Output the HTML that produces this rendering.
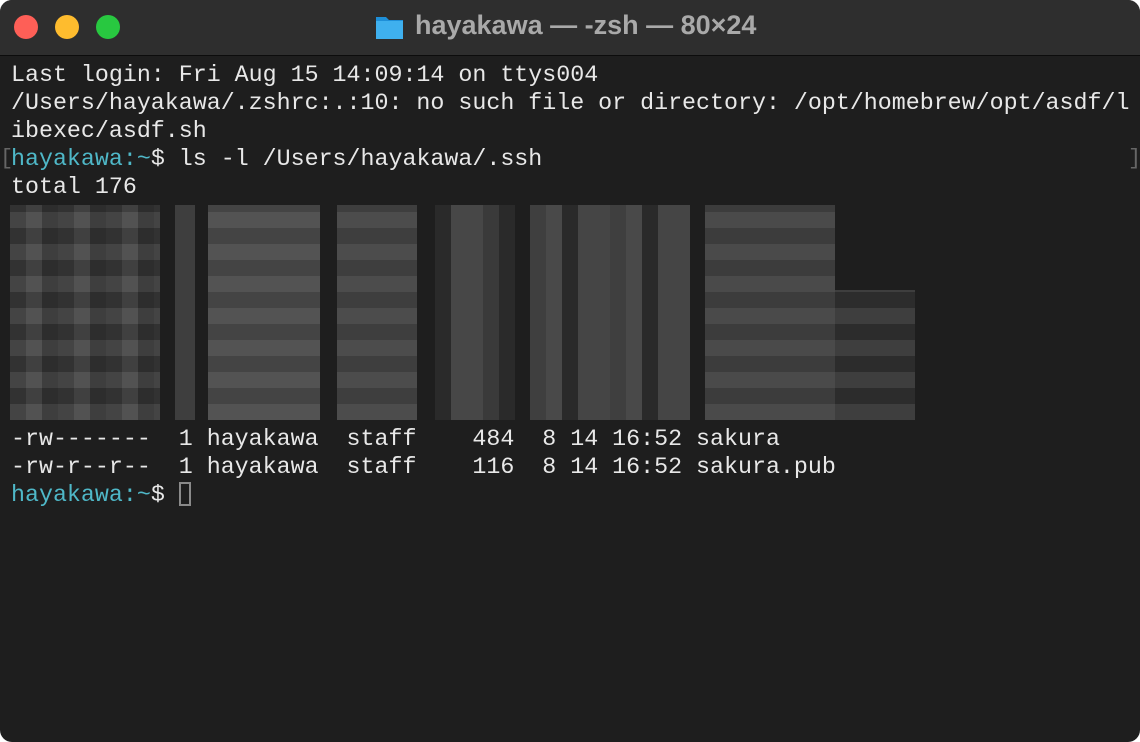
<!DOCTYPE html>
<html><head><meta charset="utf-8"><style>
html,body{margin:0;padding:0;background:transparent}
body{width:1140px;height:742px;overflow:hidden}
.win{position:absolute;left:0;top:0;width:1140px;height:742px;border-radius:12px;background:#1e1e1e;overflow:hidden}
.tb{position:absolute;left:0;top:0;width:1140px;height:55px;background:#2e2e2e;border-bottom:1px solid #0c0c0c}
.dot{position:absolute;top:15px;width:24px;height:24px;border-radius:50%}
.title{position:absolute;left:415px;top:10px;font:bold 27px "Liberation Sans",sans-serif;color:#a9a9a9;white-space:pre}
.term{position:absolute;left:11px;top:61px;font:23.3px/28px "Liberation Mono",monospace;color:#e8e8e8;white-space:pre}
.c{color:#4fb8c8}
.b{position:absolute;top:205px;height:215px}
.cur{display:inline-block;width:12px;height:24px;border:2px solid #8a8a8a;box-sizing:border-box;vertical-align:-5px}
.br{position:absolute;top:146px;font:22px "Liberation Mono",monospace;color:#666}
</style></head><body><div class="win">
<div class="tb">
<div class="dot" style="left:14px;background:#fe5f57"></div>
<div class="dot" style="left:55px;background:#febc2e"></div>
<div class="dot" style="left:96px;background:#28c840"></div>
<svg style="position:absolute;left:375px;top:14px" width="29" height="26" viewBox="0 0 29 26"><path d="M1 3h10l3 3h14v19H1z" fill="#1e8fd8"/><rect x="1" y="7" width="27" height="18" fill="#3fb0ee"/></svg>
<div class="title">hayakawa — -zsh — 80×24</div>
</div>
<div class="br" style="left:0">[</div><div class="br" style="left:1128px">]</div>
<div class="b" style="left:10px;width:150px;background:repeating-linear-gradient(90deg,#3a3a3a 0 16px,#4a4a4a 16px 32px,#343434 32px 48px),#3c3c3c;opacity:.95"></div>
<div class="b" style="left:10px;width:150px;background:repeating-linear-gradient(0deg,rgba(255,255,255,.06) 0 16px,rgba(0,0,0,.1) 16px 32px)"></div>
<div class="b" style="left:175px;width:20px;background:#3e3e3e"></div>
<div class="b" style="left:208px;width:112px;background:repeating-linear-gradient(0deg,#535353 0 16px,#444 16px 32px)"></div>
<div class="b" style="left:337px;width:80px;background:repeating-linear-gradient(0deg,#4c4c4c 0 16px,#3e3e3e 16px 32px)"></div>
<div class="b" style="left:435px;width:80px;background:repeating-linear-gradient(90deg,#2a2a2a 0 16px,#474747 16px 48px,#3a3a3a 48px 64px)"></div>
<div class="b" style="left:530px;width:160px;background:repeating-linear-gradient(90deg,#3f3f3f 0 16px,#494949 16px 32px,#2a2a2a 32px 48px,#454545 48px 80px)"></div>
<div class="b" style="left:705px;width:130px;background:repeating-linear-gradient(0deg,#4a4a4a 0 16px,#3c3c3c 16px 32px)"></div>
<div class="b" style="left:835px;top:290px;width:80px;height:130px;background:repeating-linear-gradient(0deg,#3e3e3e 0 16px,#2c2c2c 16px 32px)"></div>
<div class="term">Last login: Fri Aug 15 14:09:14 on ttys004
/Users/hayakawa/.zshrc:.:10: no such file or directory: /opt/homebrew/opt/asdf/l
ibexec/asdf.sh
<span class="c">hayakawa:~</span>$ ls -l /Users/hayakawa/.ssh
total 176








-rw-------  1 hayakawa  staff    484  8 14 16:52 sakura
-rw-r--r--  1 hayakawa  staff    116  8 14 16:52 sakura.pub
<span class="c">hayakawa:~</span>$ <span class="cur"></span></div>
</div></body></html>
